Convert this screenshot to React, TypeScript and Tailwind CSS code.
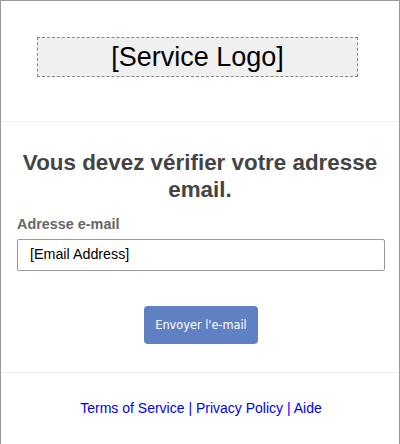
export default function App() {
  return (
    <div className="w-[400px] h-[444px] overflow-hidden bg-white" style={{ fontFamily: '"Liberation Sans", Arial, sans-serif' }}>
      <div className="border border-[#999] border-b-0 h-[460px] flex flex-col">
        <div className="pt-[36px] h-[121px] border-b border-[#eee]">
          <div className="ml-[36px] w-[321px] h-[40px] border border-dashed border-[#888] bg-[#f0f0f0] flex items-center justify-center text-[27px] text-black leading-none">
            [Service Logo]
          </div>
        </div>
        <div className="px-4 pt-[27px]">
          <h1 className="text-center text-[22.4px] leading-[27px] font-bold text-[#444]">
            Vous devez vérifier votre adresse email.
          </h1>
          <div className="mt-[13px] text-[14.4px] font-bold text-[#666] leading-[17px]">Adresse e-mail</div>
          <div className="mt-[6px] h-[32px] w-[368px] border border-[#999] rounded-[2px] flex items-center pl-[12px] text-[14.3px] text-black">
            [Email Address]
          </div>
          <div className="flex justify-center mt-[35px] pl-[2px]">
            <button
              className="w-[114px] h-[38px] bg-[#6080c4] rounded-[4px] text-white text-[12.6px]"
              style={{ fontFamily: '"DejaVu Sans Condensed", "DejaVu Sans", sans-serif' }}
            >
              Envoyer l'e-mail
            </button>
          </div>
        </div>
        <div className="mt-[28px] border-t border-[#eee] pt-[27px] text-center text-[14px] leading-[16px] text-[#0000ee] pl-[2px]">
          <a className="text-[#0000ee]">Terms of Service</a> | <a className="text-[#0000ee]">Privacy Policy</a> | <a className="text-[#0000ee]">Aide</a>
        </div>
      </div>
    </div>
  );
}
